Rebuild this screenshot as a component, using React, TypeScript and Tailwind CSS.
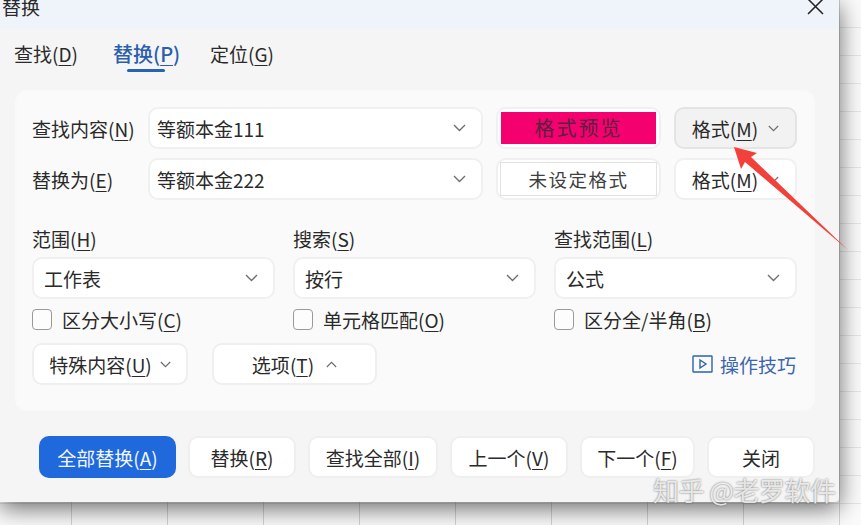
import React from "react";

const font = { fontFamily: '"Noto Sans CJK SC", "Noto Sans", sans-serif' };

function Chevron({ up = false, small = false }: { up?: boolean; small?: boolean }) {
  const w = small ? 11 : 13;
  return (
    <svg width={w} height={small ? 7 : 8} viewBox="0 0 13 8" fill="none" className="shrink-0">
      <path d={up ? "M1 7 L6.5 1.5 L12 7" : "M1 1 L6.5 6.5 L12 1"} stroke="#6f6f6f" strokeWidth="1.4" />
    </svg>
  );
}

function Label({ text, k }: { text: string; k: string }) {
  return (
    <span className="whitespace-nowrap">
      {text}(<span className="underline underline-offset-[3px] decoration-1">{k}</span>)
    </span>
  );
}

function Field({ value, className }: { value: string; className: string }) {
  return (
    <div className={`h-[42px] flex items-center justify-between pl-[7px] pr-[15px] bg-white border-2 border-[#f0f0f0] rounded-[10px] text-[#2a2a2a] ${className}`}>
      <span>{value}</span>
      <Chevron />
    </div>
  );
}

function Select({ value, label, k, check, ck, w }: { value: string; label: string; k: string; check: string; ck: string; w: string }) {
  return (
    <div className={`flex flex-col ${w}`}>
      <div className="h-[28px] flex items-center text-[#2a2a2a] leading-none"><Label text={label} k={k} /></div>
      <div className="h-[42px] mt-[5px] flex items-center justify-between pl-[10px] pr-[15px] bg-white border-2 border-[#f0f0f0] rounded-[10px] text-[#2a2a2a]">
        <span>{value}</span>
        <Chevron />
      </div>
      <div className="h-[21px] mt-[10px] flex items-center gap-[10px] text-[#2a2a2a]">
        <span className="w-[20px] h-[21px] rounded-[4px] border border-[#9a9a9a] bg-white/60 shrink-0" />
        <Label text={check} k={ck} />
      </div>
    </div>
  );
}

function Btn({ children, className }: { children: React.ReactNode; className: string }) {
  return (
    <div className={`h-[42px] flex items-center justify-center bg-white border-2 border-[#efefef] rounded-[10px] text-[#2a2a2a] ${className}`}>
      {children}
    </div>
  );
}

export default function App() {
  return (
    <div
      style={font}
      className="relative w-[861px] h-[525px] overflow-hidden text-[19px] leading-none bg-[#fbfbfb] bg-[linear-gradient(to_right,transparent_71px,#d4d4d4_71px,#d4d4d4_72px,transparent_72px),linear-gradient(to_bottom,transparent_27px,#e6e6e6_27px,#e6e6e6_28px,transparent_28px)] bg-[size:96px_28px]"
    >
      <div className="relative w-[839px] h-[502px] flex flex-col bg-[#f5f5f5] shadow-[0_6px_24px_rgba(0,0,0,0.6)] rounded-br-[4px]">
        {/* title */}
        <div className="h-[29px] shrink-0 flex items-start justify-between bg-[#eff3fa] pl-[2px] pr-[15px]">
          <span className="text-[#2a2a2a] -mt-[3px] leading-[20px]">替换</span>
          <svg width="17" height="17" viewBox="0 0 17 17" className="-mt-[2px]" fill="none">
            <path d="M1 1 L16 16 M16 1 L1 16" stroke="#222" strokeWidth="1.5" />
          </svg>
        </div>
        {/* tabs */}
        <div className="h-[44px] shrink-0 flex pl-[14px] pt-[15px] text-[#2a2a2a] leading-[19px]">
          <span className="w-[99px]"><Label text="查找" k="D" /></span>
          <span className="relative w-[97px] text-[#2b5fae] font-medium text-[20px]">
            <Label text="替换" k="P" />
            <span className="absolute left-[14px] top-[25px] w-[38px] h-[3px] rounded-full bg-[#2563b5]" />
          </span>
          <span><Label text="定位" k="G" /></span>
        </div>
        {/* panel */}
        <div className="mt-[17px] ml-[15px] w-[800px] h-[321px] shrink-0 bg-[#fafafa] border-2 border-[#f9f9f9] rounded-[12px] pl-[15px] pr-[15px] pt-[15px]">
          <div className="flex items-center h-[42px]">
            <span className="w-[116px] text-[#2a2a2a]"><Label text="查找内容" k="N" /></span>
            <Field value="等额本金111" className="w-[335px]" />
            <div className="ml-[13px] w-[165px] h-[42px] p-[3px] bg-white border-2 border-[#f0f0f0] rounded-[10px]">
              <div className="w-full h-full bg-[#f5006f] flex items-center justify-center text-[#5a2040] tracking-[2px] text-[20px]">格式预览</div>
            </div>
            <div className="ml-[13px] w-[123px] h-[42px] flex items-center justify-center gap-[10px] bg-[#f2f2f2] border-2 border-[#e4e4e4] rounded-[10px] text-[#2a2a2a]">
              <Label text="格式" k="M" />
              <Chevron small />
            </div>
          </div>
          <div className="flex items-center h-[42px] mt-[9px]">
            <span className="w-[116px] text-[#2a2a2a]"><Label text="替换为" k="E" /></span>
            <Field value="等额本金222" className="w-[335px]" />
            <div className="ml-[13px] w-[165px] h-[42px] p-[2px] bg-white border-2 border-[#f0f0f0] rounded-[10px]">
              <div className="w-full h-full border border-[#e2e2e2] bg-white flex items-center justify-center text-[#404040] tracking-[1.5px] text-[18.5px]">未设定格式</div>
            </div>
            <div className="ml-[13px] w-[123px] h-[42px] flex items-center justify-center gap-[10px] bg-white border-2 border-[#f0f0f0] rounded-[10px] text-[#2a2a2a]">
              <Label text="格式" k="M" />
              <Chevron small />
            </div>
          </div>
          <div className="flex gap-[18px] mt-[24px]">
            <Select w="w-[243px]" label="范围" k="H" value="工作表" check="区分大小写" ck="C" />
            <Select w="w-[243px]" label="搜索" k="S" value="按行" check="单元格匹配" ck="O" />
            <Select w="w-[243px]" label="查找范围" k="L" value="公式" check="区分全/半角" ck="B" />
          </div>
          <div className="flex items-center mt-[13px]">
            <Btn className="w-[156px] gap-[8px]"><Label text="特殊内容" k="U" /><Chevron small /></Btn>
            <Btn className="w-[165px] ml-[24px] gap-[12px]"><Label text="选项" k="T" /><Chevron up small /></Btn>
            <div className="ml-auto mr-[2px] flex items-center gap-[7px] text-[#3a66ad]">
              <svg width="21" height="18" viewBox="0 0 21 18" fill="none">
                <rect x="1" y="1" width="19" height="16" stroke="#2f62ad" strokeWidth="1.4" rx="0.5" />
                <path d="M8 5 L14 9 L8 13 Z" stroke="#2f62ad" strokeWidth="1.4" />
              </svg>
              <span>操作技巧</span>
            </div>
          </div>
        </div>
        {/* footer */}
        <div className="flex mt-[25px] pl-[39px] gap-[12px]">
          <div className="w-[137px] h-[42px] flex items-center justify-center bg-[#1f69dc] rounded-[10px] text-[#f2f7ff]"><Label text="全部替换" k="A" /></div>
          <Btn className="w-[108px]"><Label text="替换" k="R" /></Btn>
          <Btn className="w-[130px]"><Label text="查找全部" k="I" /></Btn>
          <Btn className="w-[118px]"><Label text="上一个" k="V" /></Btn>
          <Btn className="w-[115px]"><Label text="下一个" k="F" /></Btn>
          <Btn className="w-[108px]">关闭</Btn>
        </div>
      </div>

      {/* annotation arrow */}
      <svg className="absolute left-0 top-0 pointer-events-none" width="861" height="525" viewBox="0 0 861 525" fill="none">
        <polygon points="734,147 757,153 751,157 848,250 745,162 741,169" fill="#f2413a" />
      </svg>

      {/* watermark */}
      <div className="absolute left-[653px] top-[476px] text-[26px] leading-[28px] tracking-[-0.5px] whitespace-nowrap text-white/80 [text-shadow:0_0_2px_rgba(80,80,80,0.9)]">
        知乎 @老罗软件
      </div>
    </div>
  );
}
